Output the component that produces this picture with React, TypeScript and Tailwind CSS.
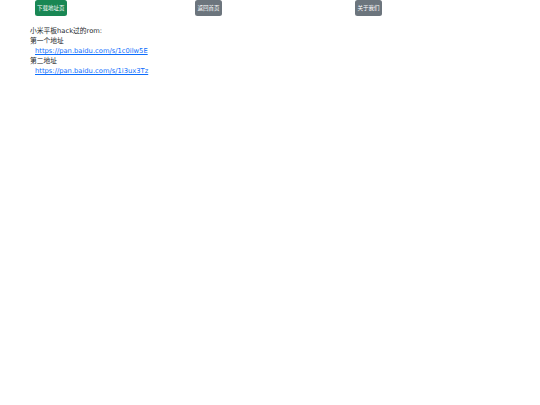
import React from 'react';

const links = [
  { label: '第一个地址', url: 'https://pan.baidu.com/s/1c0ilw5E' },
  { label: '第二地址', url: 'https://pan.baidu.com/s/1i3ux3Tz' },
];

export default function App() {
  return (
    <div className="min-h-screen w-full bg-white text-[#212529] text-[6.75px] leading-[10.1px] font-['DejaVu_Sans','Noto_Sans_CJK_SC',sans-serif]">
      <div className="w-[480px] ml-[30px]">
        {/* Top buttons */}
        <div className="grid grid-cols-3">
          <div className="pl-[5px]">
            <button className="h-[16px] px-[2px] rounded-[2.5px] bg-[#198754] text-white text-[5.5px] leading-[16px]">
              下载地址页
            </button>
          </div>
          <div className="pl-[5px]">
            <button className="h-[16px] px-[2.5px] rounded-[2.5px] bg-[#6c757d] text-white text-[5.5px] leading-[16px]">
              返回首页
            </button>
          </div>
          <div className="pl-[5px]">
            <button className="h-[16px] px-[2.5px] rounded-[2.5px] bg-[#6c757d] text-white text-[5.5px] leading-[16px]">
              关于我们
            </button>
          </div>
        </div>

        {/* Download info */}
        <div className="mt-[10px]">
          <p>小米平板hack过的rom:</p>
          {links.map((l) => (
            <div key={l.url}>
              <p>{l.label}</p>
              <p className="pl-[5px]">
                <a href="#" className="text-[#0d6efd] underline">
                  {l.url}
                </a>
              </p>
            </div>
          ))}
        </div>
      </div>
    </div>
  );
}
